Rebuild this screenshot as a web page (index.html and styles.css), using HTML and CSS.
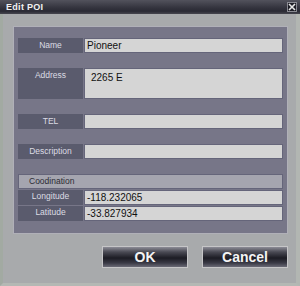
FILE: index.html
```html
<!DOCTYPE html>
<html lang="en">
<head>
    <meta charset="UTF-8">
    <title>Edit POI</title>
    <link rel="stylesheet" href="styles.css">
</head>
<body>

    <div class="dialog">
        <div class="titlebar">
            <span class="title">Edit POI</span>
            <span class="close">
                <svg width="8" height="8" viewBox="0 0 8 8">
                    <path d="M1 1 L7 7 M7 1 L1 7" stroke="#e8e8e8" stroke-width="1.6"/>
                </svg>
            </span>
        </div>

        <div class="body">
            <div class="panel">
                <div class="row">
                    <div class="label">Name</div>
                    <div class="field">Pioneer</div>
                </div>
                <div class="row tall">
                    <div class="label">Address</div>
                    <div class="field address">2265 E</div>
                </div>
                <div class="row">
                    <div class="label">TEL</div>
                    <div class="field"></div>
                </div>
                <div class="row">
                    <div class="label">Description</div>
                    <div class="field"></div>
                </div>

                <div class="coords">
                    <div class="coords-head">Coodination</div>
                    <div class="row">
                        <div class="label">Longitude</div>
                        <div class="field">-118.232065</div>
                    </div>
                    <div class="row">
                        <div class="label">Latitude</div>
                        <div class="field">-33.827934</div>
                    </div>
                </div>
            </div>

            <div class="buttons">
                <button class="btn">OK</button>
                <button class="btn">Cancel</button>
            </div>
        </div>
    </div>

</body>
</html>
```

FILE: styles.css
```css
* {
    box-sizing: border-box;
    margin: 0;
    padding: 0;
}

body {
    width: 300px;
    height: 286px;
    overflow: hidden;
    font-family: "Liberation Sans", Arial, sans-serif;
    background-color: #a8aaac;
}

.dialog {
    width: 300px;
    height: 286px;
    display: flex;
    flex-direction: column;
    background-color: #a8aaac;
}

.titlebar {
    height: 14px;
    display: flex;
    justify-content: space-between;
    align-items: center;
    padding: 0 3px 0 6px;
    background: linear-gradient(#52525c, #34343e 55%, #2a2a34 80%, #46464f);
}

.title {
    color: #f2f2f2;
    font-size: 9px;
    font-weight: bold;
    letter-spacing: 0.3px;
}

.close {
    width: 10px;
    height: 10px;
    display: flex;
    justify-content: center;
    align-items: center;
    background-color: #1e1e26;
    border: 1px solid #8a8a92;
}

.body {
    flex: 1;
    display: flex;
    flex-direction: column;
    padding: 12px 12px 0 10px;
    border-left: 3px solid #a2aaa2;
    border-right: 4px solid #b2b6b2;
    border-bottom: 3px solid #b4b8b4;
}

.panel {
    width: 275px;
    display: flex;
    flex-direction: column;
    gap: 15px;
    padding: 11px 4px 12px 4px;
    background-color: #777688;
    border: 1px solid #b0b0b8;
}

.row {
    height: 15px;
    display: flex;
    gap: 1px;
}

.row.tall {
    height: 31px;
}

.label {
    width: 65px;
    flex-shrink: 0;
    display: flex;
    justify-content: center;
    padding-top: 2px;
    background-color: #5a5b6d;
    color: #dcdce4;
    font-size: 8.5px;
}

.field {
    flex: 1;
    padding: 0 0 0 2px;
    background-color: #d5d5d5;
    border: 1px solid #65657a;
    color: #111;
    font-size: 10px;
    line-height: 13px;
}

.field.address {
    padding: 2px 0 0 6px;
}

.coords {
    display: flex;
    flex-direction: column;
    gap: 1px;
}

.coords-head {
    height: 15px;
    padding-left: 10px;
    background-color: #a5a5af;
    border: 1px solid #65657a;
    color: #2c2c34;
    font-size: 8.5px;
    line-height: 13px;
}

.coords .label {
    padding-top: 1px;
}

.buttons {
    display: flex;
    justify-content: flex-end;
    gap: 14px;
    margin-top: 12px;
    width: 275px;
}

.btn {
    width: 86px;
    height: 22px;
    border: 1px solid #c6c6c8;
    background: linear-gradient(#8c8c96, #4a4a54 25%, #1c1c24 55%, #3a3a46 80%, #6a6a76);
    color: #f4f4f4;
    font-family: "Liberation Sans", Arial, sans-serif;
    font-size: 14px;
    font-weight: bold;
}
```
